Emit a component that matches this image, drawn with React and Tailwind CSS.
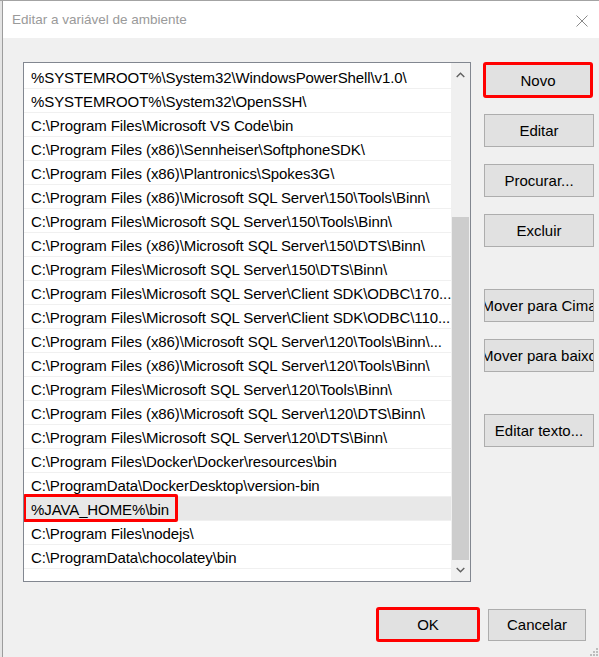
import React from "react";

const items = [
  "%SYSTEMROOT%\\System32\\WindowsPowerShell\\v1.0\\",
  "%SYSTEMROOT%\\System32\\OpenSSH\\",
  "C:\\Program Files\\Microsoft VS Code\\bin",
  "C:\\Program Files (x86)\\Sennheiser\\SoftphoneSDK\\",
  "C:\\Program Files (x86)\\Plantronics\\Spokes3G\\",
  "C:\\Program Files (x86)\\Microsoft SQL Server\\150\\Tools\\Binn\\",
  "C:\\Program Files\\Microsoft SQL Server\\150\\Tools\\Binn\\",
  "C:\\Program Files (x86)\\Microsoft SQL Server\\150\\DTS\\Binn\\",
  "C:\\Program Files\\Microsoft SQL Server\\150\\DTS\\Binn\\",
  "C:\\Program Files\\Microsoft SQL Server\\Client SDK\\ODBC\\170...",
  "C:\\Program Files\\Microsoft SQL Server\\Client SDK\\ODBC\\110...",
  "C:\\Program Files (x86)\\Microsoft SQL Server\\120\\Tools\\Binn\\...",
  "C:\\Program Files (x86)\\Microsoft SQL Server\\120\\Tools\\Binn\\",
  "C:\\Program Files\\Microsoft SQL Server\\120\\Tools\\Binn\\",
  "C:\\Program Files (x86)\\Microsoft SQL Server\\120\\DTS\\Binn\\",
  "C:\\Program Files\\Microsoft SQL Server\\120\\DTS\\Binn\\",
  "C:\\Program Files\\Docker\\Docker\\resources\\bin",
  "C:\\ProgramData\\DockerDesktop\\version-bin",
  "%JAVA_HOME%\\bin",
  "C:\\Program Files\\nodejs\\",
  "C:\\ProgramData\\chocolatey\\bin",
];

function Btn({ children, className = "" }) {
  return (
    <div
      className={
        "bg-[#e1e1e1] border border-[#adadad] flex items-center justify-center overflow-hidden whitespace-nowrap text-[15px] text-black " +
        className
      }
    >
      <span className="shrink-0">{children}</span>
    </div>
  );
}

function Chevron({ down }) {
  return (
    <svg width="9" height="6" viewBox="0 0 9 6">
      <polyline
        points={down ? "0.7,1 4.5,4.8 8.3,1" : "0.7,5 4.5,1.2 8.3,5"}
        fill="none"
        stroke="#606060"
        strokeWidth="1.4"
      />
    </svg>
  );
}

export default function App() {
  return (
    <div className="w-[599px] h-[657px] flex bg-[#f0f0f0] overflow-hidden border-t border-[#a3a3a3] font-['Liberation_Sans',Arial,sans-serif] relative">
      <div className="w-[3px] shrink-0 bg-[#e4e4e4] border-r border-[#9c9c9c]" />
      <div className="flex-1 flex flex-col">
        <div className="h-[37px] bg-white flex items-center justify-between pl-[9px] pr-[11px] pt-[2px]">
          <span className="text-[13.5px] text-[#9a9a9a]">Editar a variável de ambiente</span>
          <svg width="12" height="12" viewBox="0 0 12 12">
            <path d="M0.5 0.5 L11.5 11.5 M11.5 0.5 L0.5 11.5" stroke="#8a8a8a" strokeWidth="1" fill="none" />
          </svg>
        </div>
        <div className="flex mt-[24px] ml-[20px]">
          <div className="w-[448px] h-[520px] border border-[#828790] bg-white flex">
            <div className="flex-1 flex flex-col pt-[2px] overflow-hidden">
              {items.map((t, i) => (
                <div
                  key={i}
                  className={
                    "h-[24px] shrink-0 border-b border-[#f0f0f0] pl-[7px] pt-[3px] flex items-center whitespace-nowrap text-[15px] tracking-[-0.1px] text-black relative " +
                    (i === 18 ? "bg-[#e8e8e8]" : "")
                  }
                >
                  {t}
                  {i === 18 && (
                    <div className="absolute left-[-1px] top-[-3px] w-[155px] h-[28px] border-[3px] border-[#ff0000] rounded-[2px]" />
                  )}
                </div>
              ))}
            </div>
            <div className="w-[19px] bg-[#f0f0f0] flex flex-col">
              <div className="h-[20px] flex items-center justify-center pt-[4px]">
                <Chevron />
              </div>
              <div className="flex-1 flex flex-col">
                <div className="mt-[134px] h-[343px] mx-[1px] bg-[#cdcdcd]" />
              </div>
              <div className="h-[20px] flex items-center justify-center pb-[2px]">
                <Chevron down />
              </div>
            </div>
          </div>
          <div className="ml-[12px] flex flex-col">
            <div className="h-[36px] w-[110px] bg-[#e1e1e1] border-[3px] border-[#ff0000] rounded-[3px] flex items-center justify-center pt-[2px] text-[15px] text-black">
              Novo
            </div>
            <Btn className="h-[33px] w-[110px] mt-[16px] ml-px pt-[2px]">Editar</Btn>
            <Btn className="h-[33px] w-[110px] mt-[17px] ml-px pt-[2px]">Procurar...</Btn>
            <Btn className="h-[33px] w-[110px] mt-[17px] ml-px pt-[2px]">Excluir</Btn>
            <Btn className="h-[33px] w-[110px] mt-[42px] ml-px pt-[2px]">Mover para Cima</Btn>
            <Btn className="h-[33px] w-[110px] mt-[17px] ml-px pt-[2px]">Mover para baixo</Btn>
            <Btn className="h-[33px] w-[110px] mt-[42px] ml-px pt-[2px]">Editar texto...</Btn>
          </div>
        </div>
        <div className="flex justify-end items-center mt-[25px] pr-[13px] gap-[8px]">
          <div className="h-[35px] w-[104px] bg-[#e1e1e1] border-[3px] border-[#ff0000] rounded-[3px] flex items-center justify-center pt-[2px] text-[15px] text-black">
            OK
          </div>
          <Btn className="w-[98px] h-[32px] pt-[2px]">Cancelar</Btn>
        </div>
      </div>
      <svg className="absolute right-0 bottom-0" width="12" height="12" viewBox="0 0 12 12">
        <rect x="9" y="3" width="2" height="2" fill="#bdbdbd" />
        <rect x="6" y="6" width="2" height="2" fill="#bdbdbd" />
        <rect x="9" y="6" width="2" height="2" fill="#bdbdbd" />
        <rect x="3" y="9" width="2" height="2" fill="#bdbdbd" />
        <rect x="6" y="9" width="2" height="2" fill="#bdbdbd" />
        <rect x="9" y="9" width="2" height="2" fill="#bdbdbd" />
      </svg>
    </div>
  );
}
